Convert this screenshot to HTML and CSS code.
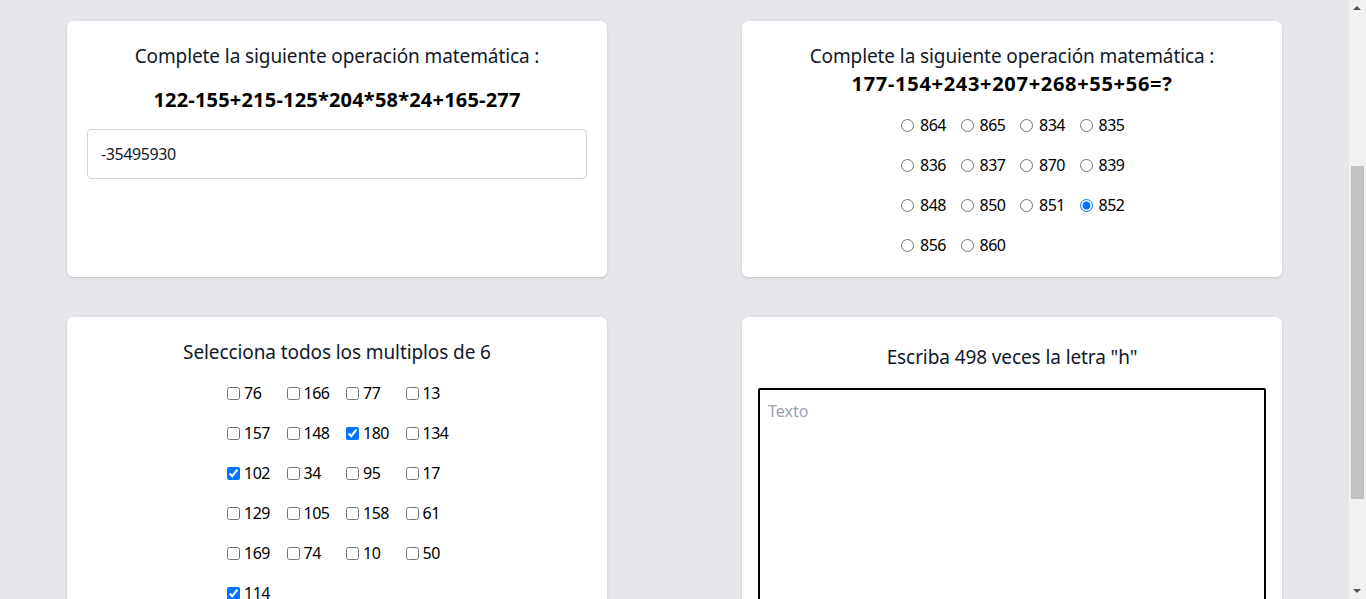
FILE: index.html
```html
<!DOCTYPE html>
<html lang="es">
<head>
<meta charset="utf-8">
<title>Operaciones</title>
<link rel="stylesheet" href="styles.css">
</head>
<body>
<main class="page">
  <div class="grid">
    <section class="card">
      <h2 class="title">Complete la siguiente operación matemática :</h2>
      <p class="expr expr-spaced">122-155+215-125*204*58*24+165-277</p>
      <input class="answer" type="text" value="-35495930">
    </section>

    <section class="card">
      <h2 class="title">Complete la siguiente operación matemática :</h2>
      <p class="expr expr-wide">177-154+243+207+268+55+56=?</p>
      <div class="options">
        <label class="opt"><input type="radio" name="op2">864</label>
        <label class="opt"><input type="radio" name="op2">865</label>
        <label class="opt"><input type="radio" name="op2">834</label>
        <label class="opt"><input type="radio" name="op2">835</label>
        <label class="opt"><input type="radio" name="op2">836</label>
        <label class="opt"><input type="radio" name="op2">837</label>
        <label class="opt"><input type="radio" name="op2">870</label>
        <label class="opt"><input type="radio" name="op2">839</label>
        <label class="opt"><input type="radio" name="op2">848</label>
        <label class="opt"><input type="radio" name="op2">850</label>
        <label class="opt"><input type="radio" name="op2">851</label>
        <label class="opt"><input type="radio" name="op2" checked>852</label>
        <label class="opt"><input type="radio" name="op2">856</label>
        <label class="opt"><input type="radio" name="op2">860</label>
      </div>
    </section>

    <section class="card">
      <h2 class="title">Selecciona todos los multiplos de 6</h2>
      <div class="options">
        <label class="opt"><input type="checkbox">76</label>
        <label class="opt"><input type="checkbox">166</label>
        <label class="opt"><input type="checkbox">77</label>
        <label class="opt"><input type="checkbox">13</label>
        <label class="opt"><input type="checkbox">157</label>
        <label class="opt"><input type="checkbox">148</label>
        <label class="opt"><input type="checkbox" checked>180</label>
        <label class="opt"><input type="checkbox">134</label>
        <label class="opt"><input type="checkbox" checked>102</label>
        <label class="opt"><input type="checkbox">34</label>
        <label class="opt"><input type="checkbox">95</label>
        <label class="opt"><input type="checkbox">17</label>
        <label class="opt"><input type="checkbox">129</label>
        <label class="opt"><input type="checkbox">105</label>
        <label class="opt"><input type="checkbox">158</label>
        <label class="opt"><input type="checkbox">61</label>
        <label class="opt"><input type="checkbox">169</label>
        <label class="opt"><input type="checkbox">74</label>
        <label class="opt"><input type="checkbox">10</label>
        <label class="opt"><input type="checkbox">50</label>
        <label class="opt"><input type="checkbox" checked>114</label>
      </div>
    </section>

    <section class="card card-text">
      <h2 class="title title-low">Escriba 498 veces la letra "h"</h2>
      <textarea class="letters" placeholder="Texto"></textarea>
    </section>
  </div>
</main>
<div class="scrollbar" aria-hidden="true">
  <span class="arrow arrow-up"></span>
  <span class="thumb"></span>
  <span class="arrow arrow-down"></span>
</div>
</body>
</html>
```

FILE: styles.css
```css
html, body {
  margin: 0;
  padding: 0;
  height: 100%;
  overflow: hidden;
}

body {
  background: #e5e7eb;
  font-family: "Noto Sans", "Open Sans", sans-serif;
  color: #111827;
}

.page {
  width: calc(100% - 17px);
}

.grid {
  display: grid;
  grid-template-columns: 540px 540px;
  column-gap: 135px;
  row-gap: 40px;
  justify-content: center;
  padding-top: 21px;
}

.card {
  background: #ffffff;
  border-radius: 6px;
  box-shadow: 0 1px 3px rgba(0, 0, 0, 0.12), 0 1px 2px rgba(0, 0, 0, 0.06);
  padding: 21px 20px 20px;
  display: flex;
  flex-direction: column;
  align-items: center;
}

.title {
  margin: 0;
  font-size: 19px;
  font-weight: 400;
  letter-spacing: -0.1px;
  line-height: 28px;
  text-align: center;
}

.title-low {
  margin-top: 5px;
}

.expr {
  margin: 0;
  font-size: 20px;
  font-weight: 700;
  line-height: 28px;
  letter-spacing: 0.2px;
  color: #000;
  text-align: center;
}

.expr-spaced {
  margin-top: 16px;
}

.expr-wide {
  letter-spacing: 0.7px;
}

.answer {
  box-sizing: border-box;
  width: 100%;
  height: 50px;
  margin-top: 15px;
  padding: 0 13px;
  border: 1px solid #d1d5db;
  border-radius: 4px;
  font-family: inherit;
  font-size: 16px;
  letter-spacing: -0.4px;
  color: #111827;
  background: #fff;
  outline: none;
}

.options {
  display: grid;
  grid-template-columns: repeat(4, 59.5px);
  row-gap: 16px;
  margin-top: 15px;
  padding-left: 16px;
}

.opt {
  display: flex;
  align-items: center;
  height: 24px;
  font-size: 16px;
  letter-spacing: -0.5px;
  color: #000;
  white-space: nowrap;
}

.opt input {
  margin: 0 4px 0 0;
  width: 13px;
  height: 13px;
}

.opt input[type="radio"] {
  margin-right: 6px;
}

.opt input[type="checkbox"] {
  margin-left: 1px;
}

.card-text {
  padding: 21px 16px 20px;
}

.letters {
  box-sizing: border-box;
  width: 100%;
  height: 240px;
  margin-top: 17px;
  padding: 10px 8px;
  border: 2px solid #000;
  border-radius: 2px;
  font-family: inherit;
  font-size: 16px;
  resize: vertical;
  outline: none;
}

.letters::placeholder {
  color: #9ca3af;
}

.scrollbar {
  position: fixed;
  top: 0;
  right: 0;
  width: 17px;
  height: 100%;
  background: #f1f1f1;
}

.thumb {
  position: absolute;
  left: 2px;
  top: 166px;
  width: 13px;
  height: 333px;
  background: #c1c1c1;
}

.arrow {
  position: absolute;
  left: 4px;
  width: 0;
  height: 0;
  border-left: 4px solid transparent;
  border-right: 4px solid transparent;
}

.arrow-up {
  top: 6px;
  border-bottom: 4px solid #505050;
}

.arrow-down {
  bottom: 6px;
  border-top: 4px solid #505050;
}
```
